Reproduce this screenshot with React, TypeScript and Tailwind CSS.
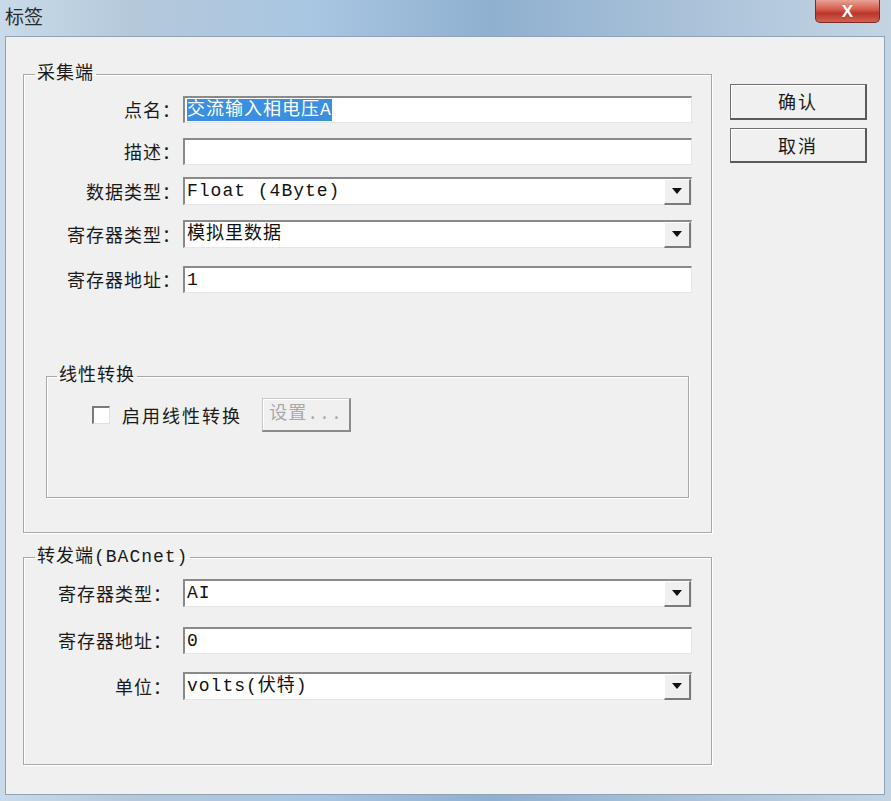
import { FC, ReactNode } from 'react';

const cjk = "font-['SimSun','Noto_Sans_CJK_SC',sans-serif]";
const mono = "font-['Liberation_Mono','Noto_Sans_CJK_SC',monospace]";

const TextBox: FC<{ value?: string; selected?: boolean }> = ({ value, selected }) => (
    <div className={`h-[27px] w-[509px] bg-white border-t-2 border-l-2 border-t-[#8a8a8a] border-l-[#8a8a8a] border-b border-r border-b-[#e6e6e6] border-r-[#e6e6e6] flex items-center pl-[2px] text-[18px] tracking-[1px] text-[#111] ${mono}`}>
        {selected ? <span className="bg-[#3b8fe0] text-white leading-[22px]">{value}</span> : value}
    </div>
);

const Combo: FC<{ value: string }> = ({ value }) => (
    <div className={`h-[28px] w-[509px] bg-white border-t-2 border-l-2 border-t-[#8a8a8a] border-l-[#8a8a8a] border-b border-r border-b-[#e6e6e6] border-r-[#e6e6e6] flex items-center text-[18px] tracking-[1px] text-[#111] ${mono}`}>
        <span className="flex-1 pl-[2px]">{value}</span>
        <div className="h-[26px] w-[27px] bg-[#f0f0f0] border-t border-l border-t-white border-l-white border-b-2 border-r-2 border-b-[#7a7a7a] border-r-[#7a7a7a] flex items-center justify-center">
            <svg width="10" height="6" viewBox="0 0 10 6"><path d="M0 0h10L5 6z" fill="#111" /></svg>
        </div>
    </div>
);

const Row: FC<{ label: string; labelW: string; gap: string; mt: string; children: ReactNode }> = ({ label, labelW, gap, mt, children }) => (
    <div className={`flex items-center ${mt}`}>
        <div className={`${labelW} ${gap} text-right text-[18px] tracking-[1px] text-[#1a1a1a] ${cjk}`}>{label}</div>
        {children}
    </div>
);

const Group: FC<{ title: string; legendMl: string; className: string; children: ReactNode }> = ({ title, legendMl, className, children }) => (
    <fieldset className={`border border-[#a8a8a8] shadow-[inset_1px_1px_0_#ffffff,1px_1px_0_#ffffff] ${className}`}>
        <legend className={`${legendMl} px-[2px] text-[18px] leading-[22px] tracking-[1px] text-[#1a1a1a] ${mono}`}>{title}</legend>
        {children}
    </fieldset>
);

const DlgButton: FC<{ label: string; h: string; mt: string }> = ({ label, h, mt }) => (
    <div className={`w-[137px] ${h} ${mt} bg-[#f0f0f0] border border-[#707070] border-b-2 border-r-2 border-b-[#5a5a5a] border-r-[#5a5a5a] shadow-[inset_1px_1px_0_#ffffff] flex items-center justify-center text-[18px] tracking-[2px] text-[#1a1a1a] ${cjk}`}>
        {label}
    </div>
);

export default function App() {
    return (
        <div className="w-[891px] h-[801px] flex flex-col bg-[linear-gradient(90deg,#c9dbea_0%,#b4c8da_15%,#a9c6e2_35%,#8fb0d0_55%,#a7c0d8_75%,#c4d4e3_100%)] overflow-hidden">
            {/* title bar */}
            <div className="h-[36px] flex justify-between items-start">
                <span className={`ml-[5px] mt-[5px] text-[19px] leading-[22px] text-[#2a2a2a] ${cjk}`}>标签</span>
                <div className="mr-[11px] w-[65px] h-[23px] rounded-b-[5px] border border-t-0 border-[#7a2b22] bg-[linear-gradient(180deg,#e9a294_0%,#d3584a_45%,#b8362a_60%,#d4604d_100%)] flex items-center justify-center">
                    <span className="text-white font-bold text-[17px] leading-none font-['Liberation_Sans',sans-serif]">X</span>
                </div>
            </div>

            {/* client area */}
            <div className="flex-1 ml-[5px] mr-[6px] mb-[6px] bg-[#f0f0f0] border border-[#8ea3b8] flex">
                <div className="pl-[17px] pt-[26px] flex flex-col">
                    <Group title="采集端" legendMl="ml-[11px]" className="w-[689px] pb-[34px]">
                        <Row label="点名：" labelW="w-[157px]" gap="mr-[2px]" mt="mt-[11px]">
                            <TextBox value="交流输入相电压A" selected />
                        </Row>
                        <Row label="描述：" labelW="w-[157px]" gap="mr-[2px]" mt="mt-[15px]">
                            <TextBox />
                        </Row>
                        <Row label="数据类型：" labelW="w-[157px]" gap="mr-[2px]" mt="mt-[12px]">
                            <Combo value="Float (4Byte)" />
                        </Row>
                        <Row label="寄存器类型：" labelW="w-[157px]" gap="mr-[2px]" mt="mt-[15px]">
                            <Combo value="模拟里数据" />
                        </Row>
                        <Row label="寄存器地址：" labelW="w-[157px]" gap="mr-[2px]" mt="mt-[18px]">
                            <TextBox value="1" />
                        </Row>

                        <Group title="线性转换" legendMl="ml-[10px]" className="mt-[72px] ml-[22px] w-[643px] pb-[65px]">
                            <div className="mt-[11px] flex items-center">
                                <div className="ml-[45px] w-[18px] h-[18px] bg-white border-t-2 border-l-2 border-t-[#7a7a7a] border-l-[#7a7a7a] border-b border-r border-b-[#e0e0e0] border-r-[#e0e0e0]" />
                                <span className={`ml-[12px] text-[18px] tracking-[2px] text-[#1a1a1a] ${cjk}`}>启用线性转换</span>
                                <div className={`ml-[20px] w-[89px] h-[34px] bg-[#f0f0f0] border border-[#c8c8c8] border-b-2 border-r-2 border-b-[#8a8a8a] border-r-[#8a8a8a] shadow-[inset_1px_1px_0_#ffffff] flex items-center justify-center text-[18px] tracking-[1px] text-[#a8a8a8] ${mono}`}>
                                    设置...
                                </div>
                            </div>
                        </Group>
                    </Group>

                    <Group title="转发端(BACnet)" legendMl="ml-[11px]" className="mt-[13px] w-[689px] pb-[64px]">
                        <Row label="寄存器类型：" labelW="w-[148px]" gap="mr-[11px]" mt="mt-[11px]">
                            <Combo value="AI" />
                        </Row>
                        <Row label="寄存器地址：" labelW="w-[148px]" gap="mr-[11px]" mt="mt-[20px]">
                            <TextBox value="0" />
                        </Row>
                        <Row label="单位：" labelW="w-[148px]" gap="mr-[11px]" mt="mt-[18px]">
                            <Combo value="volts(伏特)" />
                        </Row>
                    </Group>
                </div>

                <div className="ml-[18px] pt-[47px] flex flex-col">
                    <DlgButton label="确认" h="h-[36px]" mt="mt-0" />
                    <DlgButton label="取消" h="h-[35px]" mt="mt-[8px]" />
                </div>
            </div>
        </div>
    );
}
